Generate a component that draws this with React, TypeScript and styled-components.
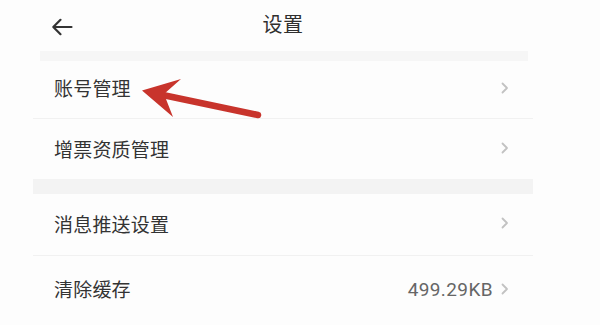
import React from "react";
import styled, { createGlobalStyle } from "styled-components";

const Global = createGlobalStyle`
  html, body { margin: 0; padding: 0; background: #fdfdfd; }
  body { width: 600px; height: 325px; overflow: hidden; font-family: "Noto Sans CJK SC", "Noto Sans", sans-serif; }
`;

const Page = styled.div`
  position: relative;
  width: 600px;
  height: 325px;
  background: #fdfdfd;
`;

const Panel = styled.div`
  margin-left: 33px;
  width: 500px;
  display: flex;
  flex-direction: column;
`;

const Header = styled.div`
  position: relative;
  height: 51px;
  display: flex;
  align-items: center;
  justify-content: center;
`;

const BackButton = styled.div`
  position: absolute;
  left: 18px;
  top: 17px;
  width: 24px;
  height: 20px;
  display: flex;
  align-items: center;
`;

const Title = styled.div`
  font-size: 20px;
  color: #2f2f2f;
  margin-top: -4px;
  letter-spacing: 0.5px;
`;

const Band = styled.div<{ $h: number; $l: number; $r: number; $c: string }>`
  height: ${(p) => p.$h}px;
  margin-left: ${(p) => p.$l}px;
  margin-right: ${(p) => p.$r}px;
  background: ${(p) => p.$c};
`;

const Row = styled.div<{ $h: number; $line?: boolean }>`
  height: ${(p) => p.$h}px;
  display: flex;
  align-items: center;
  padding: 0 23px 0 21px;
  border-bottom: ${(p) => (p.$line ? "1.5px solid #f1f1f1" : "none")};
`;

const Label = styled.div<{ $dy: number }>`
  flex: 1;
  font-size: 19px;
  color: #333;
  letter-spacing: 0.2px;
  margin-top: ${(p) => p.$dy}px;
`;

const Value = styled.div`
  font-family: Roboto, "Noto Sans", sans-serif;
  font-size: 19px;
  letter-spacing: 0.4px;
  color: #666;
  margin-right: 7px;
  margin-top: -4px;
`;

const Chevron = ({ dy = 0 }: { dy?: number }) => (
  <svg width="10" height="14" viewBox="0 0 10 14" style={{ marginTop: dy }}>
    <polyline points="2.5,2.5 7,7 2.5,11.5" fill="none" stroke="#c2c2c2" strokeWidth="1.8" strokeLinecap="round" strokeLinejoin="round" />
  </svg>
);

const Overlay = styled.svg`
  position: absolute;
  left: 0;
  top: 0;
  pointer-events: none;
`;

const rows1 = [
  { label: "账号管理", h: 57, line: true, dy: -4 },
  { label: "增票资质管理", h: 60, line: false, dy: -2 },
];

export default function App() {
  return (
    <Page>
      <Global />
      <Panel>
        <Header>
          <BackButton>
            <svg width="22" height="18" viewBox="0 0 22 18">
              <path d="M20.5 9 H2.5 M9.5 1.8 L2.3 9 L9.5 16.2" fill="none" stroke="#333" strokeWidth="2.2" strokeLinecap="round" strokeLinejoin="round" />
            </svg>
          </BackButton>
          <Title>设置</Title>
        </Header>
        <Band $h={10} $l={7} $r={5} $c="#f6f6f6" />
        {rows1.map((r) => (
          <Row key={r.label} $h={r.h} $line={r.line}>
            <Label $dy={r.dy}>{r.label}</Label>
            <Chevron dy={-3} />
          </Row>
        ))}
        <Band $h={15} $l={0} $r={0} $c="#f3f3f3" />
        <Row $h={61} $line>
          <Label $dy={-2}>消息推送设置</Label>
          <Chevron dy={-3} />
        </Row>
        <Row $h={70}>
          <Label $dy={-5}>清除缓存</Label>
          <Value>499.29KB</Value>
          <Chevron dy={-4} />
        </Row>
      </Panel>
      <Overlay width="600" height="325" viewBox="0 0 600 325">
        <line x1="158" y1="94" x2="258" y2="115" stroke="#c8342c" strokeWidth="6.5" strokeLinecap="round" />
        <polygon points="142,90.5 181,79 164,94 173,117" fill="#c8342c" />
      </Overlay>
    </Page>
  );
}
